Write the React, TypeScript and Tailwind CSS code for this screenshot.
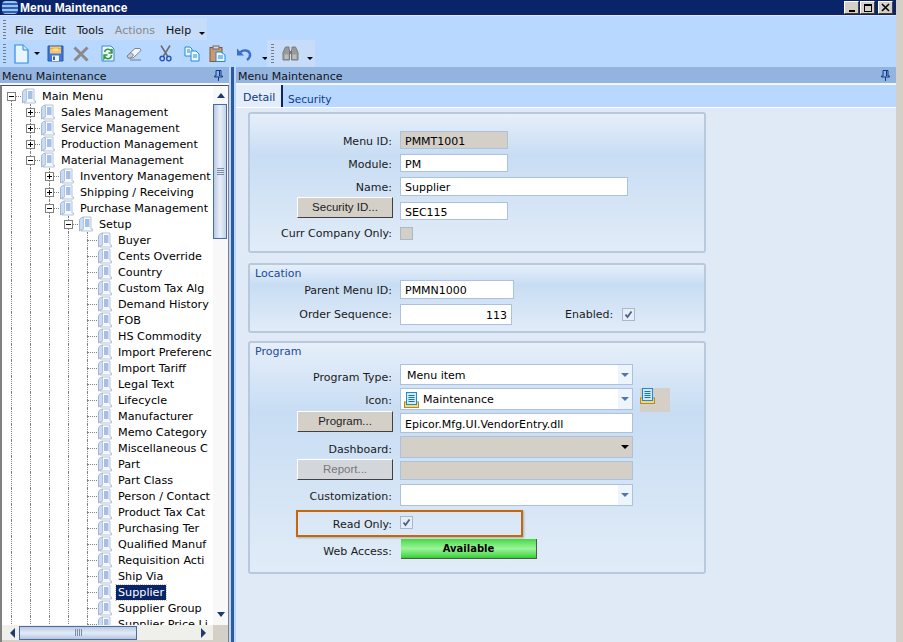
import React from "react";

const font = "font-['DejaVu_Sans','Liberation_Sans',sans-serif]";
const btnFont = "font-['Liberation_Sans',sans-serif] text-[11.5px]";

function TreeIcon() {
  return (
    <svg width="16" height="16" viewBox="0 0 16 16" className="shrink-0">
      <path d="M1.5 3.5 Q3 1 6 1 V13.5 Q3 13 1.5 15 Z" fill="#c9dcf2" stroke="#a3b8d6" />
      <path d="M5.5 1 H13 V13 H14.5 V15 H3 L5.5 13 Z" fill="#f7fafe" stroke="#b4c3da" />
      <path d="M7 4 H11.5 M7 6 H11.5 M7 8 H11.5 M7 10 H11.5" stroke="#5585cc" />
    </svg>
  );
}

type Node = { t: string; d: number; e?: "+" | "-"; sel?: boolean };
const nodes: Node[] = [
  { t: "Main Menu", d: 0, e: "-" },
  { t: "Sales Management", d: 1, e: "+" },
  { t: "Service Management", d: 1, e: "+" },
  { t: "Production Management", d: 1, e: "+" },
  { t: "Material Management", d: 1, e: "-" },
  { t: "Inventory Management", d: 2, e: "+" },
  { t: "Shipping / Receiving", d: 2, e: "+" },
  { t: "Purchase Management", d: 2, e: "-" },
  { t: "Setup", d: 3, e: "-" },
  ...[
    "Buyer", "Cents Override", "Country", "Custom Tax Alg", "Demand History", "FOB", "HS Commodity",
    "Import Preferenc", "Import Tariff", "Legal Text", "Lifecycle", "Manufacturer", "Memo Category",
    "Miscellaneous C", "Part", "Part Class", "Person / Contact", "Product Tax Cat", "Purchasing Ter",
    "Qualified Manuf", "Requisition Acti", "Ship Via",
  ].map((t) => ({ t, d: 4 })),
  { t: "Supplier", d: 4, sel: true },
  { t: "Supplier Group", d: 4 },
  { t: "Supplier Price Li", d: 4 },
];

function Guide() {
  return <div className="w-[19px] h-4 shrink-0 pl-[9px]"><div className="h-full border-l border-dotted border-[#808080]" /></div>;
}

function Expander({ e, first }: { e?: "+" | "-"; first?: boolean }) {
  return (
    <div className="w-[19px] h-4 shrink-0 relative">
      <div className={`absolute left-[9px] border-l border-dotted border-[#808080] ${first ? "top-2 h-2" : "top-0 h-4"}`} />
      <div className="absolute left-[9px] top-2 w-[10px] border-t border-dotted border-[#808080]" />
      {e && (
        <div className="absolute left-[5px] top-1 w-[9px] h-[9px] bg-white border border-[#808080] flex items-center justify-center">
          <div className="relative w-[5px] h-[5px]">
            <div className="absolute left-0 top-[2px] w-[5px] h-px bg-black" />
            {e === "+" && <div className="absolute left-[2px] top-0 w-px h-[5px] bg-black" />}
          </div>
        </div>
      )}
    </div>
  );
}

function TreeRow({ n, first }: { n: Node; first: boolean }) {
  return (
    <div className="flex h-4 items-center whitespace-nowrap text-[11.2px]">
      {Array.from({ length: n.d }).map((_, i) => <Guide key={i} />)}
      <Expander e={n.e} first={first} />
      <TreeIcon />
      <span className={`ml-[3px] px-[2px] leading-[15px] ${n.sel ? "bg-[#0a246a] text-white outline-1 outline-dotted outline-[#d8c890]" : "text-black"}`}>{n.t}</span>
    </div>
  );
}

function Tri({ dir, color = "#1f3a6e" }: { dir: "up" | "down" | "left" | "right"; color?: string }) {
  const p = { up: "1,8 5,3 9,8", down: "1,3 9,3 5,8", left: "7,1 7,11 2,6", right: "3,1 3,11 8,6" }[dir];
  return <svg width="10" height="12" viewBox="0 0 10 12"><polygon points={p} fill={color} /></svg>;
}

function Grip({ vertical }: { vertical?: boolean }) {
  return (
    <div className={`flex ${vertical ? "flex-col gap-px" : "gap-px"}`}>
      {[0, 1, 2, 3].map((i) => <div key={i} className={vertical ? "w-[7px] h-px bg-[#7d8ca5]" : "w-px h-[7px] bg-[#7d8ca5]"} />)}
    </div>
  );
}

function VScroll() {
  return (
    <div className="w-[15px] shrink-0 flex flex-col bg-[#f8f8f8]">
      <div className="h-4 flex items-center justify-center mt-[2px]"><Tri dir="up" /></div>
      <div className="h-[135px] w-[14px] bg-gradient-to-r from-[#b9c9e2] via-[#e9eff9] to-[#c3d1e8] border border-[#4a6ca5] flex items-center justify-center"><Grip vertical /></div>
      <div className="flex-1" />
      <div className="h-4 flex items-center justify-center mb-[2px]"><Tri dir="down" /></div>
    </div>
  );
}

function HScroll() {
  return (
    <div className="h-[15px] shrink-0 flex bg-[#e8e6e1]">
      <div className="w-[211px] flex items-center bg-[#efefec]">
        <div className="w-[17px] pl-[5px] flex justify-center"><Tri dir="left" /></div>
        <div className="w-[118px] h-[14px] bg-gradient-to-b from-[#b9c9e2] via-[#e3ebf7] to-[#b5c6e0] border border-[#4a6ca5] flex items-center justify-center"><Grip /></div>
        <div className="flex-1" />
        <div className="w-[15px] flex justify-center mr-[3px]"><Tri dir="right" /></div>
      </div>
      <div className="flex-1 bg-[#d4d0c8]" />
    </div>
  );
}

function Pin() {
  return (
    <svg width="9" height="11" viewBox="0 0 9 11">
      <path d="M2 .5 H7 V6 H8.5 V7 H.5 V6 H2 Z M4.5 7 V11 M5.5 1 V6" fill="none" stroke="#0a3a8c" />
    </svg>
  );
}

function Grabber({ ml = "ml-[3px]" }: { ml?: string }) {
  return <div className={`w-[3px] h-[19px] ${ml} shrink-0 bg-[repeating-linear-gradient(to_bottom,#6f7c92_0,#6f7c92_1px,transparent_1px,transparent_3px)]`} />;
}

function DropMark() {
  return <div className="w-0 h-0 border-x-[3px] border-x-transparent border-t-[3px] border-t-black" />;
}

const Ico = {
  New: () => (
    <svg width="15" height="20" viewBox="0 0 15 20"><path d="M1 1 H9 L14 6 V19 H1 Z" fill="#eaf4fd" stroke="#2a8be8" strokeWidth="1.2" /><path d="M9 1 V6 H14" fill="#cfe5f8" stroke="#2a8be8" /></svg>
  ),
  Save: () => (
    <svg width="17" height="17" viewBox="0 0 17 17"><path d="M1 1 H16 V16 H1 Z" fill="#3f78d8" stroke="#2a55a8" /><rect x="3" y="1.5" width="11" height="7" fill="#f7c76a" /><path d="M3 3.5 H14" stroke="#e8a93c" /><rect x="6" y="3.5" width="5" height="2" fill="#f9e39a" /><rect x="5" y="10.5" width="7" height="5.5" fill="#f2f2f2" /><rect x="6" y="11.5" width="2" height="3.5" fill="#3168c4" /></svg>
  ),
  Del: () => (
    <svg width="16" height="16" viewBox="0 0 16 16"><path d="M1.5 1.5 L14.5 14.5 M14.5 1.5 L1.5 14.5" stroke="#8a8a8a" strokeWidth="3" /></svg>
  ),
  Refresh: () => (
    <svg width="14" height="17" viewBox="0 0 14 17"><path d="M1 1 H10 L13 4 V16 H1 Z" fill="#eef6fc" stroke="#3a8ad6" /><path d="M3.5 7 A3.5 3.5 0 0 1 10 6 L11 4 V8 H7.5 M10.5 10 A3.5 3.5 0 0 1 4 12 L3 13.5 V10 H6.5" fill="none" stroke="#2e9a3c" strokeWidth="1.5" /></svg>
  ),
  Erase: () => (
    <svg width="16" height="14" viewBox="0 0 16 14"><path d="M1 9 L9 1.5 H14 L15 3.5 L7 11 H2.5 Z" fill="#f4f5f8" stroke="#7a8494" /><path d="M1 9 L5 5.5 L7.5 8 L5 11 H2.5 Z" fill="#c5cad4" stroke="#7a8494" /><path d="M4 13 H15" stroke="#6f7c92" /></svg>
  ),
  Cut: () => (
    <svg width="13" height="17" viewBox="0 0 13 17"><path d="M2 .5 L8.5 11 M11 .5 L4.5 11" stroke="#6b6b6b" strokeWidth="1.5" /><circle cx="3.2" cy="13.5" r="2.2" fill="none" stroke="#2a55b8" strokeWidth="1.4" /><circle cx="9.8" cy="13.5" r="2.2" fill="none" stroke="#2a55b8" strokeWidth="1.4" /></svg>
  ),
  Copy: () => (
    <svg width="16" height="16" viewBox="0 0 16 16"><path d="M1 1 H6 L8 3 V10 H1 Z" fill="#eef6fc" stroke="#1f8ae0" /><path d="M7 5 H12 L15 8 V15 H7 Z" fill="#eef6fc" stroke="#1f8ae0" /><path d="M9 9 H13 M9 11 H13 M3 4 H6 M3 6 H6" stroke="#1f8ae0" /></svg>
  ),
  Paste: () => (
    <svg width="17" height="17" viewBox="0 0 17 17"><rect x="1" y="2.5" width="12" height="14" fill="#c99a6b" stroke="#7d5a3c" /><rect x="4" y="1" width="6" height="3" fill="#d8d8d8" stroke="#6b6b6b" /><path d="M7 7 H12 L16 10 V16.5 H7 Z" fill="#eef6fc" stroke="#1f8ae0" /><path d="M9 11 H14 M9 13 H14" stroke="#1f8ae0" /></svg>
  ),
  Undo: () => (
    <svg width="16" height="14" viewBox="0 0 16 14"><path d="M4 5.5 C7 2.5 13 2.5 14 7 C14.5 9.5 13 11.5 11 13" fill="none" stroke="#3a6fd0" strokeWidth="2.4" /><path d="M1 1.5 V8.5 H8 Z" fill="#3a6fd0" /></svg>
  ),
  Bino: () => (
    <svg width="17" height="15" viewBox="0 0 17 15"><path d="M3.5 1 H7 V4 H7.5 V14 H1 V6.5 Z M13.5 1 H10 V4 H9.5 V14 H16 V6.5 Z" fill="#9a9a9a" stroke="#7a7a7a" /><rect x="2.5" y="8.5" width="4" height="4.5" fill="#bcbcbc" /><rect x="10.5" y="8.5" width="4" height="4.5" fill="#bcbcbc" /><rect x="7.5" y="5" width="2" height="3" fill="#777" /></svg>
  ),
};

function Input({ w, h, v, gray, right }: { w: string; h: string; v?: string; gray?: boolean; right?: boolean }) {
  return (
    <div className={`${w} ${h} ${gray ? "bg-[#d4d0c8]" : "bg-white"} border border-[#abc1de] flex items-center pt-[2px] leading-[13px] text-black whitespace-nowrap ${right ? "justify-end pr-1" : "pl-1"}`}>
      {v}
    </div>
  );
}

function Label({ children, pt = "pt-[2px]" }: { children: React.ReactNode; pt?: string }) {
  return <div className={`w-[143px] shrink-0 pr-[1px] text-right leading-[13px] text-[#1a1a1a] whitespace-nowrap ${pt}`}>{children}</div>;
}

function Btn({ children, disabled }: { children: React.ReactNode; disabled?: boolean }) {
  return (
    <div className={`ml-[47px] w-[96px] h-[21px] shrink-0 flex items-center justify-center border border-t-white border-l-white border-r-[#404040] border-b-[#404040] ${btnFont} ${disabled ? "bg-[#d3d7dc] text-[#777]" : "bg-[#d4d0c8] text-[#222]"}`}>
      {children}
    </div>
  );
}

function Combo({ w, h, children, gray, black }: { w: string; h: string; children?: React.ReactNode; gray?: boolean; black?: boolean }) {
  return (
    <div className={`${w} ${h} border border-[#abc1de] flex items-center ${gray ? "bg-[#d4d0c8]" : "bg-white"}`}>
      <div className="flex-1 flex items-center gap-[4px] pl-[6px] pt-[1px] leading-[13px] text-black whitespace-nowrap">{children}</div>
      <div className={`w-[14px] h-full flex items-center justify-center ${gray ? "" : "bg-[#eef4fb]"}`}>
        <div className={`w-0 h-0 border-x-[4px] border-x-transparent border-t-[4px] ${black ? "border-t-black" : "border-t-[#4f76ae]"}`} />
      </div>
    </div>
  );
}

function CheckBox({ checked, disabled }: { checked?: boolean; disabled?: boolean }) {
  return (
    <div className={`w-[13px] h-[13px] border border-[#a9b8cc] flex items-center justify-center ${disabled ? "bg-[#d4d0c8]" : "bg-[#e6edf6]"}`}>
      {checked && (
        <svg width="9" height="9" viewBox="0 0 9 9"><path d="M1.5 4.5 L3.5 7 L7.5 1.5" fill="none" stroke="#4a5f8c" strokeWidth="1.8" /></svg>
      )}
    </div>
  );
}

function Group({ h, mt, title, children }: { h: string; mt: string; title?: string; children: React.ReactNode }) {
  return (
    <div className={`${h} ${mt} ml-[12px] w-[458px] rounded-[3px] border-2 border-[#b8c9dd] bg-gradient-to-b from-[#e6effa] via-[#c8ddf3] via-30% to-[#e1ecf8] flex flex-col`}>
      {title && <div className="pl-[5px] h-[13px] mt-[2px] leading-[13px] text-[#1f4a96]">{title}</div>}
      {children}
    </div>
  );
}

function PageIcon({ className = "" }: { className?: string }) {
  return (
    <svg width="15" height="16" viewBox="0 0 15 16" className={`shrink-0 ${className}`}>
      <rect x=".5" y="10" width="14" height="5.5" fill="#f7d675" stroke="#b88a20" />
      <rect x="2.5" y=".5" width="10" height="12" fill="#cfeafb" stroke="#1f8ad0" />
      <path d="M4.5 3.5 H10.5 M4.5 5.5 H10.5 M4.5 7.5 H10.5 M4.5 9.5 H10.5" stroke="#1f6fb8" />
    </svg>
  );
}

export default function App() {
  return (
    <div className={`w-[903px] h-[642px] overflow-hidden flex bg-[#d4d0c8] text-[11px] ${font}`}>
      <div className="w-[896px] flex flex-col">
        {/* title bar */}
        <div className="h-[15px] shrink-0 bg-[#0a246a] flex items-center text-white font-bold font-['Liberation_Sans',sans-serif] text-[12px] leading-none">
          <div className="w-[16px] h-[13px] ml-[2px] mr-[2px] shrink-0 rounded-[4px] bg-[repeating-linear-gradient(to_bottom,#9cc2f0_0,#9cc2f0_2px,#2c5fc0_2px,#2c5fc0_4px)]" />
          <span>Menu Maintenance</span>
          <div className="ml-auto flex mr-[3px]">
            {["min", "max", "close"].map((k) => (
              <div key={k} className={`w-[15px] h-[13px] bg-[#d4d0c8] border border-t-white border-l-white border-r-[#404040] border-b-[#404040] flex items-center justify-center ${k === "max" ? "ml-px mr-[3px]" : ""}`}>
                {k === "min" && <div className="w-[6px] h-[2px] bg-black mt-[6px]" />}
                {k === "max" && <div className="w-[8px] h-[8px] border border-black border-t-2" />}
                {k === "close" && <svg width="9" height="9" viewBox="0 0 9 9"><path d="M1 1 L8 8 M8 1 L1 8" stroke="black" strokeWidth="1.6" /></svg>}
              </div>
            ))}
          </div>
        </div>
        <div className="flex-1 min-h-0 flex flex-col bg-[#b9d8ff] border-t border-[#e6e6e6]">
          {/* menu bar */}
          <div className="h-[24px] shrink-0 pt-[2px]">
            <div className="h-full w-[207px] flex items-center bg-[#c6dcf8]">
              <Grabber />
              <div className="flex items-center text-[#111] ml-[9px] gap-[11px] leading-none pt-[2px]">
                <span>File</span><span>Edit</span><span>Tools</span><span className="text-[#888]">Actions</span><span>Help</span>
              </div>
              <div className="ml-[8px] mt-[8px]"><DropMark /></div>
            </div>
          </div>
          {/* toolbar */}
          <div className="h-[27px] shrink-0 flex items-center">
            <div className="h-full w-[267px] flex items-center">
              <Grabber />
              <div className="ml-[8px] flex items-center gap-[5px]">
                <Ico.New />
                <DropMark />
              </div>
              <div className="ml-[7px]"><Ico.Save /></div>
              <div className="ml-[9px]"><Ico.Del /></div>
              <div className="ml-[12px]"><Ico.Refresh /></div>
              <div className="ml-[11px]"><Ico.Erase /></div>
              <div className="ml-[7px] w-px h-[22px] bg-[#7a8aa3]" />
              <div className="ml-[10px]"><Ico.Cut /></div>
              <div className="ml-[12px]"><Ico.Copy /></div>
              <div className="ml-[9px]"><Ico.Paste /></div>
              <div className="ml-[10px]"><Ico.Undo /></div>
              <div className="ml-[10px] mt-[9px]"><DropMark /></div>
            </div>
            <div className="h-full w-[48px] flex items-center bg-[#c6dcf8]">
              <Grabber ml="ml-[4px]" />
              <div className="ml-[8px]"><Ico.Bino /></div>
              <div className="ml-[8px] mt-[9px]"><DropMark /></div>
            </div>
          </div>
          {/* docking panes */}
          <div className="flex-1 min-h-0 flex">
            <div className="w-[229px] shrink-0 flex flex-col">
              <div className="h-[16px] shrink-0 bg-[#94b4e0] flex items-center pl-[2px] pr-[6px] justify-between text-[#10141c] leading-[13px]">
                <span className="pt-[2px]">Menu Maintenance</span><Pin />
              </div>
              <div className="h-[2px] shrink-0 bg-[#f4f8fe]" />
              <div className="flex-1 min-h-0 flex flex-col bg-white border-t border-l-2 border-r border-[#808080] border-t-[#505050]">
                <div className="flex-1 min-h-0 flex">
                  <div className="flex-1 min-w-0 overflow-hidden pt-[2px]">
                    {nodes.map((n, i) => <TreeRow key={n.t} n={n} first={i === 0} />)}
                  </div>
                  <VScroll />
                </div>
                <HScroll />
                <div className="h-[2px] shrink-0 bg-[#d4d0c8]" />
              </div>
            </div>
            <div className="w-[7px] shrink-0 flex">
              <div className="w-[2px] bg-[#b9d8ff]" />
              <div className="w-[3px] bg-[#2f5aa0]" />
              <div className="w-[2px] bg-[#b9d8ff]" />
            </div>
            <div className="flex-1 min-w-0 flex flex-col bg-[#dfeaf6]">
              <div className="h-[16px] shrink-0 bg-[#94b4e0] flex items-center pl-[2px] pr-[6px] justify-between text-[#10141c] leading-[13px]">
                <span className="pt-[2px]">Menu Maintenance</span><Pin />
              </div>
              <div className="h-[2px] shrink-0 bg-[#f4f8fe]" />
              <div className="h-[22px] shrink-0 bg-[#b9d8ff] flex text-[#0f3a86] leading-[13px]">
                <div className="w-[47px] h-[22px] bg-[#e4eefa] border-r-2 border-[#0a246a] pl-[7px] pt-[2px] flex items-center">Detail</div>
                <div className="pl-[5px] flex items-center pt-[6px] text-[10.6px]">Security</div>
              </div>
              <div className="h-[1px] shrink-0 bg-white" />
              <Group h="h-[141px]" mt="mt-[4px]">
                <div className="mt-[17px] h-[18px] flex items-center"><Label>Menu ID:</Label><div className="w-[7px]" /><Input w="w-[108px]" h="h-[18px]" v="PMMT1001" gray /></div>
                <div className="mt-[5px] h-[18px] flex items-center"><Label>Module:</Label><div className="w-[7px]" /><Input w="w-[108px]" h="h-[18px]" v="PM" /></div>
                <div className="mt-[5px] h-[19px] flex items-center"><Label>Name:</Label><div className="w-[7px]" /><Input w="w-[228px]" h="h-[19px]" v="Supplier" /></div>
                <div className="mt-[1px] flex items-start h-[23px]"><Btn>Security ID...</Btn><div className="w-[7px]" /><div className="mt-[5px]"><Input w="w-[108px]" h="h-[18px]" v="SEC115" /></div></div>
                <div className="mt-[7px] h-[13px] flex items-center"><Label pt="pt-0">Curr Company Only:</Label><div className="w-[7px]" /><CheckBox disabled /></div>
              </Group>
              <Group h="h-[70px]" mt="mt-[10px]" title="Location">
                <div className="h-[19px] flex items-center"><Label pt="pt-[1px]">Parent Menu ID:</Label><div className="w-[7px]" /><Input w="w-[114px]" h="h-[19px]" v="PMMN1000" /></div>
                <div className="mt-[5px] h-[21px] flex items-center"><Label pt="pt-0">Order Sequence:</Label><div className="w-[7px]" /><Input w="w-[112px]" h="h-[21px]" v="113" right /><div className="ml-[53px] w-[48px] text-right leading-[13px] text-[#1a1a1a]">Enabled:</div><div className="ml-[9px]"><CheckBox checked /></div></div>
              </Group>
              <Group h="h-[233px]" mt="mt-[8px]" title="Program">
                <div className="mt-[6px] h-[21px] flex items-center"><Label pt="pt-[5px]">Program Type:</Label><div className="w-[7px]" /><Combo w="w-[233px]" h="h-[21px]">Menu item</Combo></div>
                <div className="mt-[3px] h-[22px] flex items-center"><Label pt="pt-[3px]">Icon:</Label><div className="w-[7px]" /><Combo w="w-[233px]" h="h-[22px]"><PageIcon className="-ml-[3px]" />Maintenance</Combo><div className="ml-[7px] w-[30px] h-[24px] mb-[-2px] bg-[#d4d0c8]"><PageIcon /></div></div>
                <div className="mt-[1px] flex items-start h-[22px]"><Btn>Program...</Btn><div className="w-[7px]" /><div className="mt-[2px]"><Input w="w-[233px]" h="h-[20px]" v="Epicor.Mfg.UI.VendorEntry.dll" /></div></div>
                <div className="mt-[3px] h-[22px] flex items-center"><Label pt="pt-[5px]">Dashboard:</Label><div className="w-[7px]" /><Combo w="w-[233px]" h="h-[22px]" gray black /></div>
                <div className="mt-[1px] flex items-start h-[22px]"><Btn disabled>Report...</Btn><div className="w-[7px]" /><div className="mt-[2px]"><Input w="w-[233px]" h="h-[19px]" gray /></div></div>
                <div className="mt-[3px] h-[22px] flex items-center"><Label>Customization:</Label><div className="w-[7px]" /><Combo w="w-[233px]" h="h-[22px]" /></div>
                <div className="mt-[4px] ml-[46px] w-[227px] h-[27px] border-2 border-[#c8660a] shadow-[1px_1px_2px_rgba(0,0,0,0.25)] flex items-center">
                  <div className="w-[95px] pr-[1px] pt-[2px] leading-[13px] text-right text-[#1a1a1a] shrink-0">Read Only:</div>
                  <div className="ml-[7px] mb-[2px]"><CheckBox checked /></div>
                </div>
                <div className="mt-[2px] h-[20px] flex items-center"><Label pt="pt-[5px]">Web Access:</Label><div className="w-[8px]" />
                  <div className="w-[136px] h-[20px] flex items-center justify-center font-bold text-[10px] text-black border-b border-r border-[#555] bg-gradient-to-b from-[#3fd83f] via-[#9af59a] to-[#2fd02f]">Available</div>
                </div>
              </Group>
            </div>
          </div>
        </div>
      </div>
      <div className="flex-1 bg-[#d4d0c8]" />
    </div>
  );
}
